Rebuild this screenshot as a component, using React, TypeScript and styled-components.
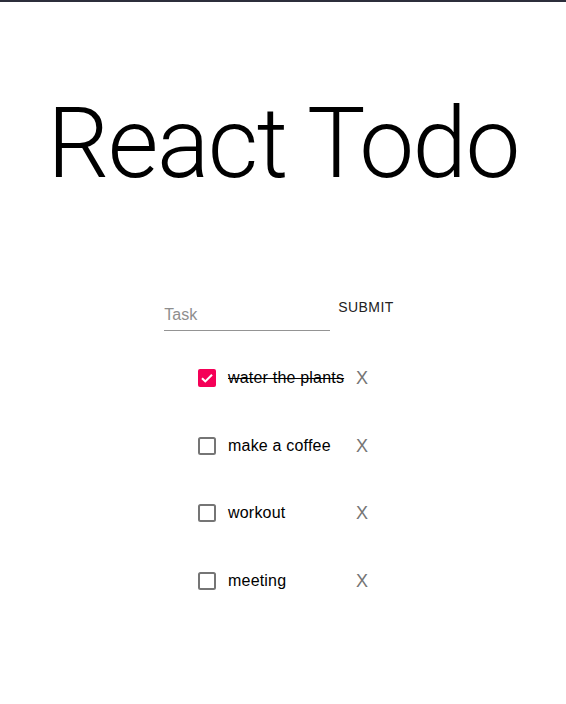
import React, { useState } from "react";
import styled, { createGlobalStyle } from "styled-components";

const GlobalStyle = createGlobalStyle`
  html, body { margin: 0; padding: 0; background: #ffffff; }
  body { font-family: "Liberation Sans", Arial, sans-serif; color: rgba(0,0,0,0.87); }
`;

const TopBar = styled.div`
  height: 2px;
  background: #2c2e3b;
`;

const Page = styled.main`
  display: flex;
  flex-direction: column;
  align-items: center;
`;

const Title = styled.h1`
  margin: 94px 0 0;
  font-family: Roboto, "Liberation Sans", sans-serif;
  font-weight: 300;
  font-size: 98px;
  line-height: 96px;
  letter-spacing: -1.6px;
  color: #000;
`;

const Form = styled.form`
  margin-top: 97px;
  display: flex;
  align-items: flex-start;
`;

const InputWrap = styled.div`
  margin-top: 10px;
  width: 166px;
  border-bottom: 1px solid rgba(0, 0, 0, 0.42);
`;

const TaskInput = styled.input`
  display: block;
  width: 100%;
  box-sizing: border-box;
  border: 0;
  outline: none;
  padding: 6px 0 6px;
  height: 31px;
  font-family: "Liberation Sans", Arial, sans-serif;
  font-size: 16px;
  color: rgba(0, 0, 0, 0.87);
  background: transparent;
  &::placeholder { color: #8e8e8e; opacity: 1; }
`;

const SubmitButton = styled.button`
  border: 0;
  background: transparent;
  padding: 6px 8px;
  min-width: 64px;
  font-family: "Liberation Sans", Arial, sans-serif;
  font-size: 14px;
  line-height: 24.5px;
  letter-spacing: 0.4px;
  text-transform: uppercase;
  color: #222222;
  cursor: pointer;
`;

const List = styled.ul`
  list-style: none;
  margin: 13px 0 0;
  padding: 0;
`;

const Row = styled.li`
  height: 67.8px;
  display: grid;
  grid-template-columns: 18px 116px 12px;
  column-gap: 12px;
  align-items: center;
`;

const Box = styled.span`
  display: flex;
  width: 18px;
  height: 18px;
  cursor: pointer;
`;

const Label = styled.span<{ $done: boolean }>`
  font-size: 16px;
  line-height: 19px;
  letter-spacing: 0.2px;
  color: #000;
  white-space: nowrap;
  text-decoration: ${(p) => (p.$done ? "line-through" : "none")};
  margin-top: -1px;
`;

const Remove = styled.button`
  border: 0;
  background: transparent;
  padding: 0;
  width: 12px;
  text-align: left;
  font-family: "Liberation Sans", Arial, sans-serif;
  font-size: 18px;
  line-height: 20px;
  color: #757575;
  cursor: pointer;
`;

const CheckIcon = ({ checked }: { checked: boolean }) =>
  checked ? (
    <svg width="18" height="18" viewBox="0 0 18 18">
      <rect x="0" y="0" width="18" height="18" rx="2" fill="#f50057" />
      <path d="M4 9.2 L7.3 12.4 L14 5.8" fill="none" stroke="#fff" strokeWidth="2.1" />
    </svg>
  ) : (
    <svg width="18" height="18" viewBox="0 0 18 18">
      <rect x="1" y="1" width="16" height="16" rx="1.5" fill="none" stroke="#757575" strokeWidth="2" />
    </svg>
  );

const initial = [
  { text: "water the plants", done: true },
  { text: "make a coffee", done: false },
  { text: "workout", done: false },
  { text: "meeting", done: false },
];

export default function App() {
  const [todos, setTodos] = useState(initial);
  return (
    <>
      <GlobalStyle />
      <TopBar />
      <Page>
        <Title>React Todo</Title>
        <Form onSubmit={(e) => e.preventDefault()}>
          <InputWrap>
            <TaskInput placeholder="Task" />
          </InputWrap>
          <SubmitButton type="submit">Submit</SubmitButton>
        </Form>
        <List>
          {todos.map((t, i) => (
            <Row key={t.text}>
              <Box
                onClick={() =>
                  setTodos(todos.map((x, j) => (j === i ? { ...x, done: !x.done } : x)))
                }
              >
                <CheckIcon checked={t.done} />
              </Box>
              <Label $done={t.done}>{t.text}</Label>
              <Remove onClick={() => setTodos(todos.filter((_, j) => j !== i))}>X</Remove>
            </Row>
          ))}
        </List>
      </Page>
    </>
  );
}
